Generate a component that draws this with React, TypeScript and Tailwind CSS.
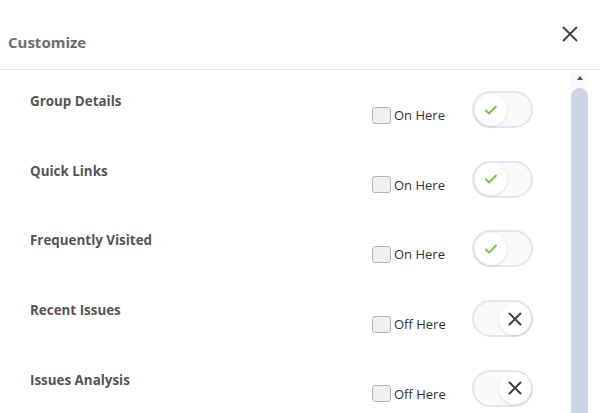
import { useState } from "react";

type Item = { id: string; title: string; on: boolean };

const items: Item[] = [
  { id: "group", title: "Group Details", on: true },
  { id: "links", title: "Quick Links", on: true },
  { id: "visited", title: "Frequently Visited", on: true },
  { id: "recent", title: "Recent Issues", on: false },
  { id: "analysis", title: "Issues Analysis", on: false },
];

function Toggle({ on, onClick }: { on: boolean; onClick: () => void }) {
  return (
    <button
      type="button"
      onClick={onClick}
      className="relative w-[61px] h-[37px] rounded-full border-2 border-[#e3e6f0] bg-[#fafafd]"
    >
      <span
        className={
          on
            ? "absolute top-[0.5px] left-[1px] w-[32px] h-[32px] rounded-full bg-white shadow-[0_1px_3px_rgba(0,0,0,0.12)] flex items-center justify-center"
            : "absolute top-[0.5px] right-[0px] w-[32px] h-[32px] rounded-full bg-white shadow-[0_1px_3px_rgba(0,0,0,0.12)] flex items-center justify-center"
        }
      >
        {on ? (
          <svg width="16" height="16" viewBox="0 0 16 16" fill="none">
            <path d="M3 8.5l3 3 7-7" stroke="#7cc242" strokeWidth="2" strokeLinecap="round" strokeLinejoin="round" />
          </svg>
        ) : (
          <svg width="16" height="16" viewBox="0 0 16 16" fill="none">
            <path d="M2.5 2.5l11 11M13.5 2.5l-11 11" stroke="#3b4050" strokeWidth="2" strokeLinecap="round" />
          </svg>
        )}
      </span>
    </button>
  );
}

export default function App() {
  const [state, setState] = useState<Item[]>(items);

  const flip = (id: string) =>
    setState(state.map((i) => (i.id === id ? { ...i, on: !i.on } : i)));

  return (
    <div className="w-[600px] h-[413px] overflow-hidden bg-white font-['Open_Sans',sans-serif] flex flex-col">
      <div className="h-[70px] shrink-0 border-b border-[#e8e8ec] flex justify-between">
        <h2 className="pl-[8px] pt-[31px] text-[15px] leading-[22px] font-bold text-[#6d6d6d]">
          Customize
        </h2>
        <button type="button" className="mr-[22px] mt-[26px] w-[16px] h-[16px] flex items-center justify-center">
          <svg width="16" height="16" viewBox="0 0 16 16" fill="none">
            <path d="M1.5 1.5l13 13M14.5 1.5l-13 13" stroke="#3a3f50" strokeWidth="1.8" strokeLinecap="round" />
          </svg>
        </button>
      </div>
      <div className="flex-1 flex min-h-0">
        <div className="flex-1 pt-[11px]">
          {state.map((item) => (
            <div key={item.id} className="h-[69.7px] flex items-start">
              <div className="w-[372px] shrink-0 pl-[30px] pt-[11px] text-[13.4px] leading-[18px] font-bold text-[#555]">
                {item.title}
              </div>
              <label className="w-[100px] shrink-0 mt-[25px] flex items-center gap-[3px] text-[13px] leading-[18px] text-[#333]">
                <span className="w-[19px] h-[17px] rounded-[3px] border border-[#b5b5b5] bg-[#efefef]" />
                {item.on ? "On Here" : "Off Here"}
              </label>
              <div className="mt-[10px]">
                <Toggle on={item.on} onClick={() => flip(item.id)} />
              </div>
            </div>
          ))}
        </div>
        <div className="w-[17px] mr-[12px] mt-[2px] bg-[#f9fafc] flex flex-col items-center">
          <svg width="8" height="6" viewBox="0 0 8 6" className="mt-[3px]">
            <path d="M4 1L7 5H1z" fill="#4a4f5c" />
          </svg>
          <div className="mt-[7px] w-[17px] flex-1 rounded-t-full bg-[#cdd4e4]" />
        </div>
      </div>
    </div>
  );
}
